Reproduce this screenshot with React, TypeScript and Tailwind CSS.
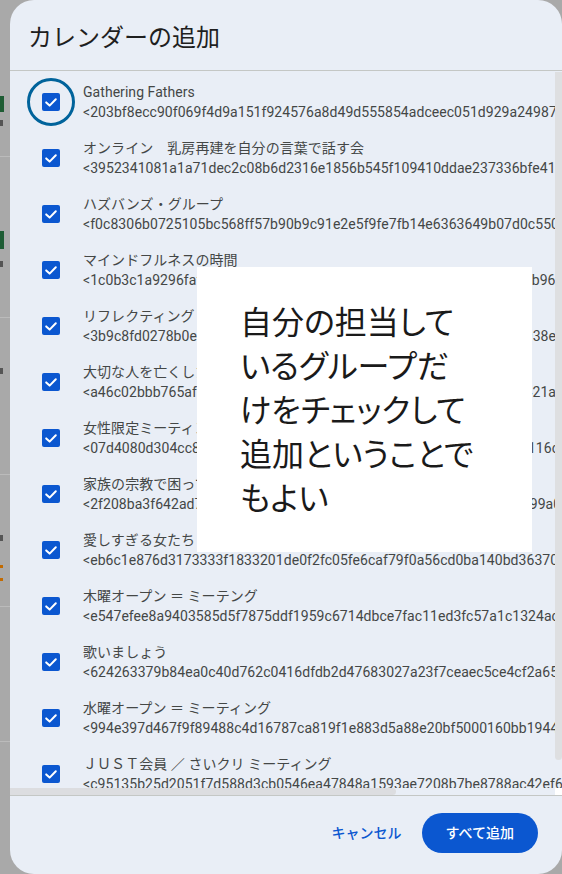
import React from 'react';

type Cal = { name: string; id: string };

const TAIL = '@group.calendar.google.com>';

const calendars: Cal[] = [
  { name: 'Gathering Fathers', id: '<203bf8ecc90f069f4d9a151f924576a8d49d555854adceec051d929a24987c3' + TAIL },
  { name: 'オンライン　乳房再建を自分の言葉で話す会', id: '<3952341081a1a71dec2c08b6d2316e1856b545f109410ddae237336bfe41611a' + TAIL },
  { name: 'ハズバンズ・グループ', id: '<f0c8306b0725105bc568ff57b90b9c91e2e5f9fe7fb14e6363649b07d0c5508e' + TAIL },
  { name: 'マインドフルネスの時間', id: '<1c0b3c1a9296faf7d21e0a8c43b5f6e90d2a7c18b4e53f6a0d92c71e84b96a4f' + TAIL },
  { name: 'リフレクティング', id: '<3b9c8fd0278b0e4a61c2d9f07e3b58a1c64d0e92f7b3a5c81d6e04f2b938e1c' + TAIL },
  { name: '大切な人を亡くした人の会', id: '<a46c02bbb765af3e81d0c94b27f6a5e13c8d0b4f92a6e71c3d58f0b2e421a7d' + TAIL },
  { name: '女性限定ミーティング', id: '<07d4080d304cc8e2a5f19b3d07c64e8a2f51b9d03e7c6a4f82b0d5e91116c3' + TAIL },
  { name: '家族の宗教で困っている人の会', id: '<2f208ba3f642ad71c5e09b3f8a2d64c1e7f05b93a8d2c46e1f7b0a3c8399a0e5' + TAIL },
  { name: '愛しすぎる女たち', id: '<eb6c1e876d3173333f1833201de0f2fc05fe6caf79f0a56cd0ba140bd36370a' + TAIL },
  { name: '木曜オープン ＝ ミーテング', id: '<e547efee8a9403585d5f7875ddf1959c6714dbce7fac11ed3fc57a1c1324ac4f' + TAIL },
  { name: '歌いましょう', id: '<624263379b84ea0c40d762c0416dfdb2d47683027a23f7ceaec5ce4cf2a65b1' + TAIL },
  { name: '水曜オープン ＝ ミーティング', id: '<994e397d467f9f89488c4d16787ca819f1e883d5a88e20bf5000160bb19445c' + TAIL },
  { name: 'ＪＵＳＴ会員 ／ さいクリ ミーティング', id: '<c95135b25d2051f7d588d3cb0546ea47848a1593ae7208b7be8788ac42ef61' + TAIL },
];

const font = { fontFamily: 'Roboto, "Noto Sans CJK JP", sans-serif' };

function Checkbox({ focused }: { focused?: boolean }) {
  return (
    <div className="relative w-[18px] h-[18px] shrink-0">
      {focused && (
        <div className="absolute left-[-15px] top-[-15px] w-[48px] h-[48px] rounded-full border-[3px] border-[#00639b]" />
      )}
      <div className="w-[18px] h-[18px] rounded-[2px] bg-[#0b57d0] flex items-center justify-center">
        <svg width="18" height="18" viewBox="0 0 18 18" fill="none">
          <polyline points="4.2,9.4 7.6,12.6 13.8,6.2" stroke="white" strokeWidth="2" strokeLinecap="round" strokeLinejoin="round" />
        </svg>
      </div>
    </div>
  );
}

export default function App() {
  return (
    <div className="relative flex w-[562px] h-[874px] overflow-hidden bg-[#a9a9a9]" style={font}>
      {/* page behind the scrim */}
      <div className="w-[10px] shrink-0 flex flex-col">
        <div className="h-[96px]" />
        <div className="h-[16px] w-[4px] bg-[#1e5c34]" />
        <div className="h-[8px]" />
        <div className="h-[6px] w-[3px] bg-[#555]" />
        <div className="h-[30px]" />
        <div className="h-px bg-[#bbbbbb]" />
        <div className="h-[74px]" />
        <div className="h-[18px] w-[4px] bg-[#1e5c34]" />
        <div className="h-[12px]" />
        <div className="h-[6px] w-[3px] bg-[#555]" />
        <div className="h-[50px]" />
        <div className="h-px bg-[#bbbbbb]" />
        <div className="h-[50px]" />
        <div className="h-[6px] w-[3px] bg-[#555]" />
        <div className="h-[100px]" />
        <div className="h-px bg-[#bbbbbb]" />
        <div className="h-[60px]" />
        <div className="h-[6px] w-[3px] bg-[#555]" />
        <div className="h-[24px]" />
        <div className="h-[3px] w-[3px] bg-[#c26a00]" />
        <div className="h-[10px]" />
        <div className="h-[3px] w-[3px] bg-[#c26a00]" />
        <div className="h-[25px]" />
        <div className="h-px bg-[#bbbbbb]" />
        <div className="h-[134px]" />
        <div className="h-px bg-[#bbbbbb]" />
      </div>

      {/* dialog */}
      <div className="flex-1 flex flex-col bg-[#e9eef6] rounded-[24px] overflow-hidden">
        <div className="h-[70px] shrink-0 px-[18px] pt-[22px]">
          <h1 className="text-[24px] leading-[32px] text-[#1f1f1f]">カレンダーの追加</h1>
        </div>
        <div className="h-px shrink-0 bg-[#c4c7c5]" />

        <div className="relative h-[717px] shrink-0 overflow-hidden">
          <div className="flex flex-col pt-[3px]">
            {calendars.map((c, i) => (
              <div key={i} className="h-[56px] shrink-0 flex items-center gap-[23px] pl-[32px]">
                <Checkbox focused={i === 0} />
                <div className="flex flex-col whitespace-nowrap text-[14px] leading-[20px] tracking-[0.05px] text-[#444746]">
                  <span>{c.name}</span>
                  <span>{c.id}</span>
                </div>
              </div>
            ))}
          </div>
          <div className="absolute right-0 top-[1px] w-[7px] h-[688px] rounded-b-full bg-[#dedfe1]" />
        </div>

        <div className="h-[7px] shrink-0 flex">
          <div className="w-[386px] h-[7px] rounded-r-full bg-[#dcdde0]" />
          <div className="flex-1" />
          <div className="w-[7px] h-[7px] bg-white" />
        </div>
        <div className="h-px shrink-0 bg-[#c4c7c5]" />

        <div className="h-[78px] shrink-0 flex items-center justify-end gap-2 pr-6 pb-1">
          <button className="h-10 px-3 text-[14px] font-medium text-[#0b57d0]">キャンセル</button>
          <button className="h-10 px-6 rounded-full bg-[#0b57d0] text-[14px] font-medium text-white">すべて追加</button>
        </div>
      </div>

      {/* annotation */}
      <div
        className="absolute left-[197px] top-[267px] w-[335px] h-[285px] bg-white pl-[43px] pt-[31px] text-[32px] leading-[44px] text-[#1a1a1a] [font-feature-settings:'palt']"
        style={{ fontFamily: '"Noto Sans CJK JP", sans-serif' }}
      >
        <p>自分の担当して</p>
        <p>いるグループだ</p>
        <p>けをチェックして</p>
        <p>追加ということで</p>
        <p>もよい</p>
      </div>
    </div>
  );
}
